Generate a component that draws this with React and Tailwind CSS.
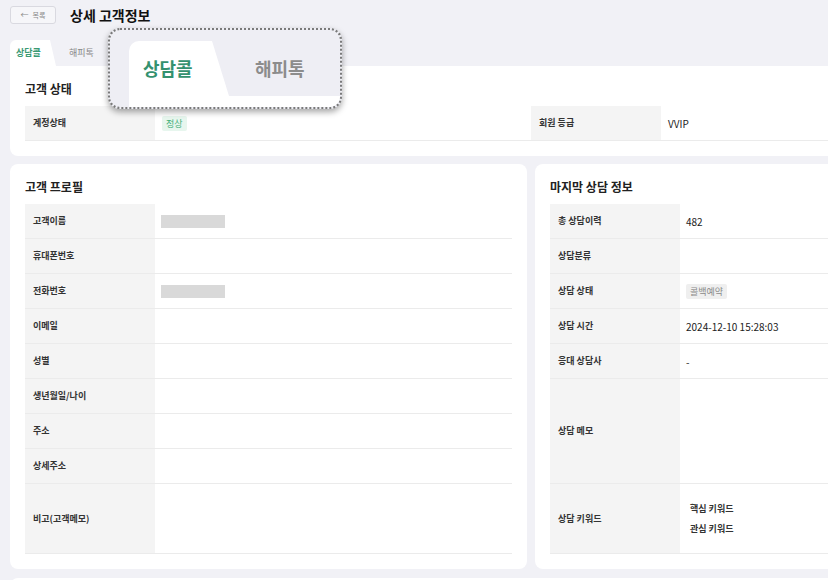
const FONT = "font-['Noto_Sans_CJK_KR','Noto_Sans',sans-serif]"

function Placeholder() {
  return <div className="h-[13px] w-[64px] bg-[#d9d9d9]" />
}

function Badge({ tone, children }) {
  const cls = tone === 'green'
    ? 'bg-[#e7f6ee] text-[#3fae78]'
    : 'bg-[#efefef] text-[#8a8a8a]'
  return <span className={`inline-block rounded-[2px] px-[4px] py-[1px] text-[9px] leading-[13px] ${cls}`}>{children}</span>
}

function Row({ label, h = 'h-[35px]', children }) {
  return (
    <div className={`flex border-b border-[#ebebeb] ${h}`}>
      <div className="flex w-[130px] shrink-0 items-center bg-[#f4f4f4] pl-[8px] text-[9px] font-bold text-[#333]">
        {label}
      </div>
      <div className="flex flex-1 items-center pl-[6px] text-[10px] text-[#222]">{children}</div>
    </div>
  )
}

function Panel({ title, children, className = '' }) {
  return (
    <div className={`bg-white px-[15px] pt-3 pb-[15px] ${className}`}>
      <h2 className="h-[22px] text-[12px] leading-[22px] font-bold text-[#222]">{title}</h2>
      <div className="mt-[6px]">{children}</div>
    </div>
  )
}

const profile = [
  ['고객이름', <Placeholder />],
  ['휴대폰번호', null],
  ['전화번호', <Placeholder />],
  ['이메일', null],
  ['성별', null],
  ['생년월일/나이', null],
  ['주소', null],
  ['상세주소', null],
]

export default function App() {
  return (
    <div className={`relative h-[580px] w-[828px] overflow-hidden bg-[#f1f1f6] ${FONT}`}>
      <div className="w-[1042px] ml-[10px]">
        {/* header */}
        <div className="flex h-[18px] items-center gap-[14px] mt-[6px]">
          <button className="flex h-[18px] w-[46px] items-center justify-center gap-[4px] rounded-[3px] border border-[#d9d9e0] bg-[#f6f6f9] text-[7px] text-[#888]">
            <span className="text-[8px]">←</span> 목록
          </button>
          <h1 className="text-[14px] leading-[18px] font-bold text-[#111]">상세 고객정보</h1>
        </div>

        {/* tabs */}
        <div className="mt-[16px] flex h-[26px] items-stretch">
          <div className="flex">
            <div className="flex w-[40px] items-center rounded-tl-[6px] bg-white pl-[6px] text-[9px] font-bold text-[#3a9a74]">상담콜</div>
            <div className="w-[6px] bg-white [clip-path:polygon(0_0,0_100%,100%_100%)]" />
          </div>
          <div className="flex items-center pl-[13px] text-[9px] text-[#888]">해피톡</div>
        </div>

        <Panel title="고객 상태" className="rounded-b-lg rounded-tr-lg">
          <div className="flex h-[35px] border-b border-[#ebebeb]">
            <div className="flex w-[130px] items-center bg-[#f4f4f4] pl-[8px] text-[9px] font-bold text-[#333]">계정상태</div>
            <div className="flex w-[376px] items-center pl-[7px]"><Badge tone="green">정상</Badge></div>
            <div className="flex w-[130px] items-center bg-[#f4f4f4] pl-[8px] text-[9px] font-bold text-[#333]">회원 등급</div>
            <div className="flex flex-1 items-center pl-[7px] text-[10px] text-[#222]">VVIP</div>
          </div>
        </Panel>

        <div className="mt-[8px] grid grid-cols-2 gap-[8px]">
          <Panel title="고객 프로필" className="rounded-lg">
            {profile.map(([label, value]) => (
              <Row key={label} label={label}>{value}</Row>
            ))}
            <Row label="비고(고객메모)" h="h-[70px]" />
          </Panel>

          <Panel title="마지막 상담 정보" className="rounded-lg">
            <Row label="총 상담이력">482</Row>
            <Row label="상담분류" />
            <Row label="상담 상태"><Badge>콜백예약</Badge></Row>
            <Row label="상담 시간">2024-12-10 15:28:03</Row>
            <Row label="응대 상담사">-</Row>
            <Row label="상담 메모" h="h-[105px]" />
            <Row label="상담 키워드" h="h-[70px]">
              <div className="flex flex-col gap-[6px] pl-[4px] text-[9px] font-bold text-[#333]">
                <span>핵심 키워드</span>
                <span>관심 키워드</span>
              </div>
            </Row>
          </Panel>
        </div>

        <div className="mt-[9px] h-[40px] rounded-lg bg-white" />
      </div>

      {/* magnified tab callout */}
      <div className="absolute left-[108px] top-[28px] h-[81px] w-[234px] overflow-hidden rounded-[12px] border-2 border-dotted border-[#7a7a7a] bg-[#eeeef4] shadow-[0_3px_6px_rgba(0,0,0,0.35)]">
        <div className="ml-[19px] mt-[11px] flex flex-col">
          <div className="flex h-[55px]">
            <div className="flex">
              <div className="flex w-[83px] items-center rounded-tl-[10px] bg-white pl-[14px] text-[18px] font-bold text-[#34916f]">상담콜</div>
              <div className="w-[17px] bg-white [clip-path:polygon(0_0,0_100%,100%_100%)]" />
            </div>
            <div className="flex items-center pl-[26px] text-[18px] font-bold text-[#8c8c8c]">해피톡</div>
          </div>
          <div className="h-[14px] bg-white" />
        </div>
      </div>
    </div>
  )
}
